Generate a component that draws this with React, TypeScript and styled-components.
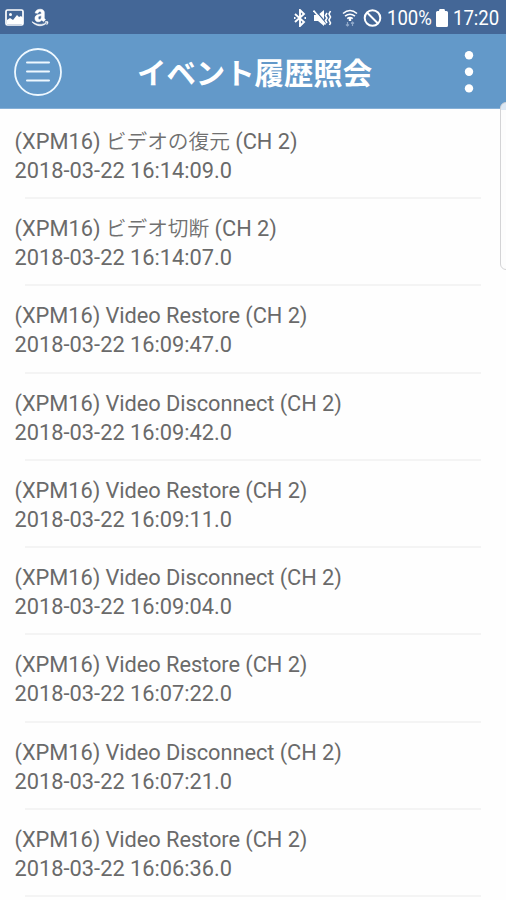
import React from "react";
import styled, { createGlobalStyle } from "styled-components";
import { FaAmazon } from "react-icons/fa";

const GlobalStyle = createGlobalStyle`
  * { box-sizing: border-box; }
  body { margin: 0; background: #fefefe; overflow: hidden; }
`;

const Screen = styled.div`
  position: relative;
  width: 506px;
  height: 900px;
  overflow: hidden;
  background: #fefefe;
  font-family: Roboto, "Noto Sans CJK JP", sans-serif;
`;

const StatusBar = styled.div`
  display: flex;
  align-items: center;
  justify-content: space-between;
  height: 34px;
  padding: 1px 7px 0 5px;
  background: #446797;
  color: #fff;
`;

const StatusGroup = styled.div<{ $gap: number }>`
  display: flex;
  align-items: center;
  gap: ${(p) => p.$gap}px;
  height: 100%;
`;

const AmazonIcon = styled(FaAmazon)`
  width: 20px;
  height: 19px;
  stroke: #fff;
  stroke-width: 14px;
`;

const StatusText = styled.span<{ $width: number }>`
  width: ${(p) => p.$width}px;
  font-size: 20.4px;
  line-height: 32px;
  white-space: nowrap;
  transform: scaleX(0.91);
  transform-origin: left center;
`;

const Header = styled.header`
  display: grid;
  grid-template-columns: 62px 1fr 74px;
  align-items: center;
  height: 75px;
  background: #6399c9;
  border-bottom: 1px solid #86b0d7;
  color: #fff;
`;

const MenuButton = styled.button`
  width: 48px;
  height: 48px;
  margin: 1px 0 0 14px;
  padding: 0;
  border: 0;
  background: none;
  svg { display: block; }
`;

const MoreButton = styled(MenuButton)`
  width: 20px;
  margin-left: 27px;
`;

const Title = styled.h1`
  margin: 0 0 0 75px;
  font: 700 29.4px/40px "Noto Sans CJK JP", sans-serif;
  white-space: nowrap;
`;

const List = styled.ul`
  margin: 2px 0 0;
  padding: 0;
  list-style: none;
`;

const Item = styled.li`
  height: 87.25px;
  padding: 15.8px 0 0 14.6px;
  color: #6a6a6a;
  font-size: 21.8px;
  font-weight: 400;
  line-height: 29.2px;
  white-space: nowrap;
`;

const Line = styled.div<{ $tracking?: number }>`
  height: 29.2px;
  letter-spacing: ${(p) => p.$tracking ?? 0}px;
`;

const Kanji = styled.span`
  color: #707070;
  font-family: "Noto Sans CJK JP", sans-serif;
  font-size: 20.7px;
  font-weight: 350;
  line-height: 20px;
`;

const Divider = styled.div`
  width: 456px;
  height: 2px;
  margin: 12px 0 0 10.4px;
  background: #f4f4f4;
`;

const ScrollHandle = styled.div`
  position: absolute;
  top: 102px;
  left: 500px;
  width: 14px;
  height: 168px;
  border: 1.5px solid #d4d4d6;
  border-radius: 6px;
  background: linear-gradient(#dce8f4 0 7px, #fdfdfd 7px);
`;

const PictureIcon = () => (
  <svg width="19" height="17" viewBox="0 0 19 17">
    <rect x="1" y="1" width="17" height="15" rx="1.5" fill="none" stroke="#fff" strokeWidth="1.7" />
    <path d="M2 14v-3l3-2 3 2 4-5 2 2 2-1 2 2v6H2z" fill="#fff" />
    <circle cx="5.5" cy="5.5" r="1.5" fill="#fff" />
  </svg>
);

const BluetoothIcon = () => (
  <svg width="14" height="18" viewBox="0 0 14 18" fill="none" stroke="#fff" strokeWidth="1.9">
    <path d="M2 5l9 8-4 4V1l4 4-9 8" />
    <path d="M1 9h1.5M11.5 9H13" strokeWidth="2" />
  </svg>
);

const MuteIcon = () => (
  <svg width="19" height="18" viewBox="0 0 19 18">
    <path d="M1 6h4l6-5v16l-6-5H1z" fill="#fff" />
    <path d="M2 1l11 13" stroke="#446797" strokeWidth="1.4" />
    <path d="M0.5 1.5l12 14" stroke="#fff" strokeWidth="1.7" />
    <path d="M14 4l-1.5 2.5L14 9l-1.5 2.5L14 14M17.5 2L16 5l1.5 3L16 11l1.5 3-1 2" fill="none" stroke="#fff" strokeWidth="1.6" />
  </svg>
);

const WifiIcon = () => (
  <svg width="16" height="18" viewBox="0 0 16 18" fill="none" stroke="#fff">
    <path d="M1 4.5q7-6 14 0M3 7.2q5-4 10 0M5.2 9.6q2.8-2 5.6 0" strokeWidth="1.6" />
    <path d="M8 9v3" strokeWidth="2.4" />
    <path d="M5.5 13v4M4 15.5L5.5 17 7 15.5M10.5 17v-4M9 14.5l1.5-1.5 1.5 1.5" stroke="#91a9c9" strokeWidth="1.2" />
  </svg>
);

const BlockedIcon = () => (
  <svg width="19" height="18" viewBox="0 0 19 18" fill="none" stroke="#fff" strokeWidth="2">
    <circle cx="9.5" cy="9" r="7.8" />
    <path d="M4 3.5l11 11" />
  </svg>
);

const BatteryIcon = () => (
  <svg width="12" height="18" viewBox="0 0 12 18" fill="#fff">
    <path d="M4 0h4q1 0 1 2h1.5q1.5 0 1.5 1.5v13q0 1.5-1.5 1.5h-9Q0 18 0 16.5v-13Q0 2 1.5 2H3q0-2 1-2z" />
  </svg>
);

const MenuIcon = () => (
  <svg width="48" height="48" viewBox="0 0 48 48" fill="none" stroke="#eef8ff">
    <circle cx="24" cy="24" r="23" strokeWidth="1.8" />
    <path d="M13 14.5h22M13 23.5h22M13 32.5h22" strokeWidth="2" strokeLinecap="round" />
  </svg>
);

const MoreIcon = () => (
  <svg width="20" height="48" viewBox="0 0 20 48" fill="#fff">
    <circle cx="10" cy="7.2" r="4.2" />
    <circle cx="10" cy="23.8" r="4.2" />
    <circle cx="10" cy="40.4" r="4.2" />
  </svg>
);

interface EventEntry {
  label: string;
  time: string;
  japanese?: boolean;
}

const events: EventEntry[] = [
  { label: "ビデオの復元", time: "16:14:09.0", japanese: true },
  { label: "ビデオ切断", time: "16:14:07.0", japanese: true },
  { label: "Video Restore", time: "16:09:47.0" },
  { label: "Video Disconnect", time: "16:09:42.0" },
  { label: "Video Restore", time: "16:09:11.0" },
  { label: "Video Disconnect", time: "16:09:04.0" },
  { label: "Video Restore", time: "16:07:22.0" },
  { label: "Video Disconnect", time: "16:07:21.0" },
  { label: "Video Restore", time: "16:06:36.0" },
];

export default function App() {
  return (
    <Screen>
      <GlobalStyle />
      <StatusBar>
        <StatusGroup $gap={6}>
          <PictureIcon />
          <AmazonIcon />
        </StatusGroup>
        <StatusGroup $gap={10}>
          <StatusGroup $gap={6}>
            <BluetoothIcon />
            <MuteIcon />
          </StatusGroup>
          <StatusGroup $gap={5}>
            <WifiIcon />
            <BlockedIcon />
            <StatusText $width={44}>100%</StatusText>
            <BatteryIcon />
            <StatusText $width={46}>17:20</StatusText>
          </StatusGroup>
        </StatusGroup>
      </StatusBar>
      <Header>
        <MenuButton aria-label="メニュー"><MenuIcon /></MenuButton>
        <Title>イベント履歴照会</Title>
        <MoreButton aria-label="その他"><MoreIcon /></MoreButton>
      </Header>
      <List>
        {events.map((e) => (
          <Item key={e.time}>
            <Line $tracking={e.japanese ? -0.02 : -0.06}>
              (XPM16) {e.japanese ? <Kanji>{e.label}</Kanji> : e.label} (CH 2)
            </Line>
            <Line>2018-03-22 {e.time}</Line>
            <Divider />
          </Item>
        ))}
      </List>
      <ScrollHandle />
    </Screen>
  );
}
